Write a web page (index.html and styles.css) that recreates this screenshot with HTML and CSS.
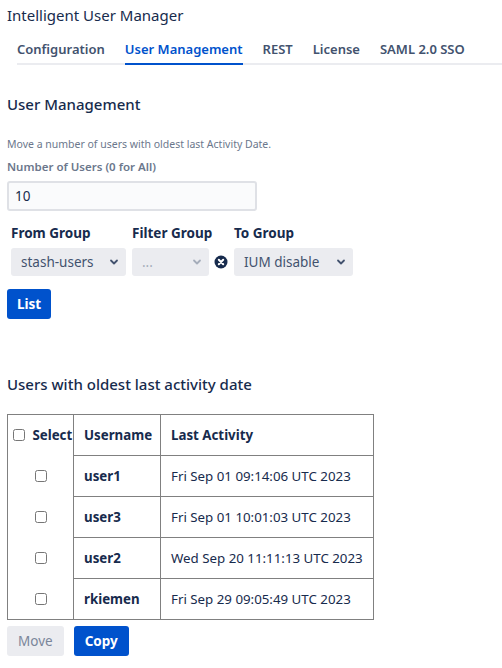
FILE: index.html
```html
<!DOCTYPE html>
<html lang="en">
<head>
  <meta charset="UTF-8">
  <title>Intelligent User Manager</title>
  <link rel="stylesheet" href="styles.css">
</head>
<body>
  <h1 class="app-title">Intelligent User Manager</h1>

  <nav class="tabs">
    <a class="tab">Configuration</a>
    <a class="tab active">User Management</a>
    <a class="tab">REST</a>
    <a class="tab">License</a>
    <a class="tab">SAML 2.0 SSO</a>
  </nav>

  <h2 class="section-title">User Management</h2>
  <p class="desc">Move a number of users with oldest last Activity Date.</p>

  <label class="field-label" for="count">Number of Users (0 for All)</label>
  <input class="text-input" id="count" type="text" value="10">

  <div class="groups">
    <div class="group">
      <div class="group-label">From Group</div>
      <div class="select wide">stash-users <span class="chev"><svg width="10" height="10" viewBox="0 0 10 10"><path d="M2 3.5 L5 6.5 L8 3.5" fill="none" stroke="#42526E" stroke-width="1.8" stroke-linecap="round" stroke-linejoin="round"/></svg></span></div>
    </div>
    <div class="group">
      <div class="group-label">Filter Group</div>
      <div class="select-row">
        <div class="select narrow muted">... <span class="chev"><svg width="10" height="10" viewBox="0 0 10 10"><path d="M2 3.5 L5 6.5 L8 3.5" fill="none" stroke="#A5ADBA" stroke-width="1.8" stroke-linecap="round" stroke-linejoin="round"/></svg></span></div>
        <svg class="clear" width="14" height="14" viewBox="0 0 14 14"><circle cx="7" cy="7" r="6.5" fill="#172B4D"/><path d="M4.8 4.8 L9.2 9.2 M9.2 4.8 L4.8 9.2" stroke="#fff" stroke-width="2" stroke-linecap="round"/></svg>
      </div>
    </div>
    <div class="group">
      <div class="group-label">To Group</div>
      <div class="select mid">IUM disable <span class="chev"><svg width="10" height="10" viewBox="0 0 10 10"><path d="M2 3.5 L5 6.5 L8 3.5" fill="none" stroke="#42526E" stroke-width="1.8" stroke-linecap="round" stroke-linejoin="round"/></svg></span></div>
    </div>
  </div>

  <button class="btn primary list-btn">List</button>

  <h2 class="section-title results">Users with oldest last activity date</h2>

  <table class="users">
    <colgroup>
      <col class="c-sel">
      <col class="c-name">
      <col class="c-date">
    </colgroup>
    <thead>
      <tr>
        <th class="sel"><input type="checkbox"> Select</th>
        <th class="name">Username</th>
        <th>Last Activity</th>
      </tr>
    </thead>
    <tbody>
      <tr><td class="sel"><input type="checkbox"></td><td class="name">user1</td><td>Fri Sep 01 09:14:06 UTC 2023</td></tr>
      <tr><td class="sel"><input type="checkbox"></td><td class="name">user3</td><td>Fri Sep 01 10:01:03 UTC 2023</td></tr>
      <tr><td class="sel"><input type="checkbox"></td><td class="name">user2</td><td>Wed Sep 20 11:11:13 UTC 2023</td></tr>
      <tr><td class="sel"><input type="checkbox"></td><td class="name">rkiemen</td><td>Fri Sep 29 09:05:49 UTC 2023</td></tr>
    </tbody>
  </table>

  <div class="actions">
    <button class="btn plain">Move</button>
    <button class="btn primary">Copy</button>
  </div>
</body>
</html>
```

FILE: styles.css
```css
body {
  margin: 0;
  padding: 0 7px;
  font-family: "Noto Sans", "Open Sans", sans-serif;
  font-size: 14px;
  color: #172B4D;
  background: #fff;
}
.app-title {
  font-size: 15px;
  font-weight: 400;
  margin: 4px 0 0;
  line-height: 22px;
}
.tabs {
  display: flex;
  gap: 20px;
  margin: 12px -7px 0 10px;
  border-bottom: 2px solid #EBECF0;
}
.tab {
  font-size: 13px;
  font-weight: 600;
  color: #42526E;
  padding: 2px 0 5px;
  margin-bottom: -2px;
  border-bottom: 2px solid transparent;
}
.tab.active {
  color: #0052CC;
  border-bottom-color: #0052CC;
}
.section-title {
  font-size: 15px;
  font-weight: 500;
  margin: 28px 0 0;
  line-height: 22px;
}
.desc {
  font-size: 10.5px;
  color: #6B778C;
  margin: 22px 0 0;
  line-height: 14px;
}
.field-label {
  display: block;
  font-size: 11.5px;
  font-weight: 600;
  color: #6B778C;
  margin-top: 8px;
  line-height: 16px;
}
.text-input {
  display: block;
  box-sizing: border-box;
  width: 250px;
  height: 30px;
  margin-top: 6px;
  padding: 0 6px;
  font: inherit;
  font-size: 13.5px;
  color: #172B4D;
  background: #FAFBFC;
  border: 2px solid #DFE1E6;
  border-radius: 3px;
}
.groups {
  display: flex;
  gap: 6px;
  margin: 13px 0 0 4px;
}
.group-label {
  font-size: 13.5px;
  font-weight: 700;
  line-height: 18px;
  margin-bottom: 6px;
}
.select-row {
  display: flex;
  align-items: center;
  gap: 5px;
}
.select {
  display: flex;
  justify-content: space-between;
  align-items: center;
  box-sizing: border-box;
  height: 28px;
  padding: 0 7px 0 10px;
  background: #EBECF0;
  border-radius: 3px;
  font-size: 13.5px;
  color: #42526E;
}
.select.wide { width: 115px; }
.select.narrow { width: 77px; }
.select.mid { width: 119px; }
.select.muted { color: #A5ADBA; }
.chev { display: flex; }
.clear { flex: none; }
.btn {
  font: inherit;
  font-size: 13.5px;
  border: none;
  border-radius: 3px;
  height: 30px;
  padding: 0 11px;
  cursor: pointer;
}
.btn.primary {
  background: #0052CC;
  color: #fff;
  font-weight: 700;
}
.btn.plain {
  background: #EBECF0;
  color: #7A869A;
}
.list-btn {
  display: block;
  margin-top: 13px;
  padding: 0 10px;
}
.results { margin-top: 54px; }
.users {
  border-collapse: collapse;
  table-layout: fixed;
  width: 367px;
  margin-top: 19px;
  font-size: 13.3px;
}
.c-sel { width: 66px; }
.c-name { width: 87px; }
.users th, .users td {
  border: 1px solid #808080;
  height: 40px;
  padding: 0 10px;
  text-align: left;
  white-space: nowrap;
  overflow: hidden;
}
.users th { font-weight: 700; }
.users .sel {
  padding: 0;
  border-top: none;
  border-bottom: none;
  text-align: center;
}
.users thead .sel {
  border-top: 1px solid #808080;
  text-align: left;
  padding-left: 5px;
}
.users tbody tr:last-child .sel { border-bottom: 1px solid #808080; }
.users .name { font-weight: 700; }
.users input {
  width: 12px;
  height: 12px;
  margin: 0 4px 0 0;
  vertical-align: -1px;
}
.users tbody input { margin: 0; }
.actions {
  display: flex;
  gap: 10px;
  margin-top: 6px;
}
```
